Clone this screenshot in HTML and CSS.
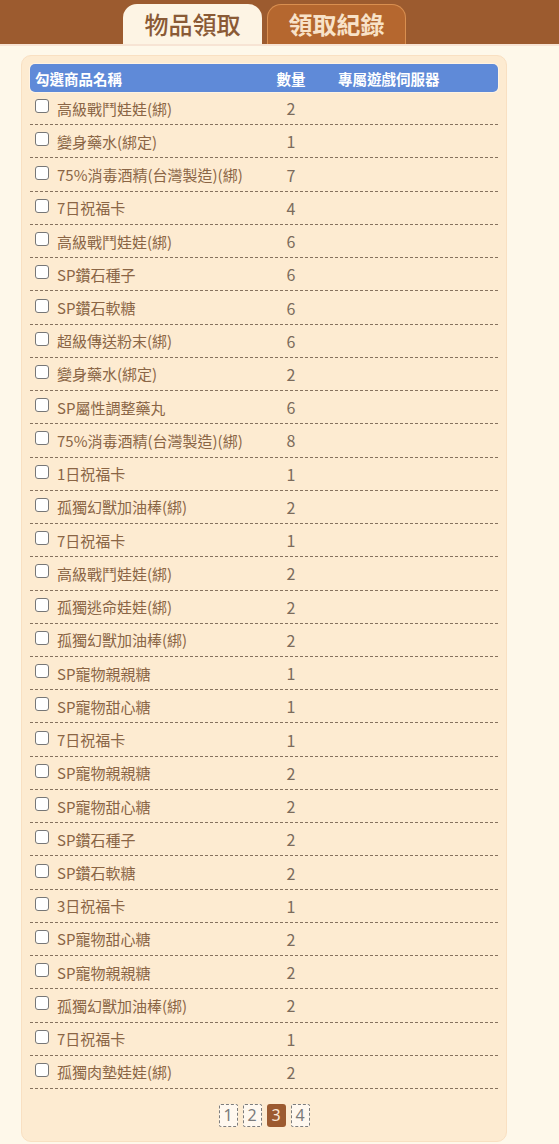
FILE: index.html
```
<!DOCTYPE html>
<html lang="zh-Hant">
<head>
<meta charset="utf-8">
<title>物品領取</title>
<link rel="stylesheet" href="styles.css">
</head>
<body>
<div class="topbar">
  <div class="tab tab-active">物品領取</div>
  <div class="tab tab-inactive">領取紀錄</div>
</div>
<div class="card">
  <div class="thead">
    <div class="c-name">勾選商品名稱</div>
    <div class="c-qty">數量</div>
    <div class="c-server">專屬遊戲伺服器</div>
  </div>
  <div class="tbody">
    <div class="row"><div class="c-name"><span class="cb"></span>高級戰鬥娃娃(綁)</div><div class="c-qty">2</div><div class="c-server"></div></div>
    <div class="row"><div class="c-name"><span class="cb"></span>變身藥水(綁定)</div><div class="c-qty">1</div><div class="c-server"></div></div>
    <div class="row"><div class="c-name"><span class="cb"></span>75%消毒酒精(台灣製造)(綁)</div><div class="c-qty">7</div><div class="c-server"></div></div>
    <div class="row"><div class="c-name"><span class="cb"></span>7日祝福卡</div><div class="c-qty">4</div><div class="c-server"></div></div>
    <div class="row"><div class="c-name"><span class="cb"></span>高級戰鬥娃娃(綁)</div><div class="c-qty">6</div><div class="c-server"></div></div>
    <div class="row"><div class="c-name"><span class="cb"></span>SP鑽石種子</div><div class="c-qty">6</div><div class="c-server"></div></div>
    <div class="row"><div class="c-name"><span class="cb"></span>SP鑽石軟糖</div><div class="c-qty">6</div><div class="c-server"></div></div>
    <div class="row"><div class="c-name"><span class="cb"></span>超級傳送粉末(綁)</div><div class="c-qty">6</div><div class="c-server"></div></div>
    <div class="row"><div class="c-name"><span class="cb"></span>變身藥水(綁定)</div><div class="c-qty">2</div><div class="c-server"></div></div>
    <div class="row"><div class="c-name"><span class="cb"></span>SP屬性調整藥丸</div><div class="c-qty">6</div><div class="c-server"></div></div>
    <div class="row"><div class="c-name"><span class="cb"></span>75%消毒酒精(台灣製造)(綁)</div><div class="c-qty">8</div><div class="c-server"></div></div>
    <div class="row"><div class="c-name"><span class="cb"></span>1日祝福卡</div><div class="c-qty">1</div><div class="c-server"></div></div>
    <div class="row"><div class="c-name"><span class="cb"></span>孤獨幻獸加油棒(綁)</div><div class="c-qty">2</div><div class="c-server"></div></div>
    <div class="row"><div class="c-name"><span class="cb"></span>7日祝福卡</div><div class="c-qty">1</div><div class="c-server"></div></div>
    <div class="row"><div class="c-name"><span class="cb"></span>高級戰鬥娃娃(綁)</div><div class="c-qty">2</div><div class="c-server"></div></div>
    <div class="row"><div class="c-name"><span class="cb"></span>孤獨逃命娃娃(綁)</div><div class="c-qty">2</div><div class="c-server"></div></div>
    <div class="row"><div class="c-name"><span class="cb"></span>孤獨幻獸加油棒(綁)</div><div class="c-qty">2</div><div class="c-server"></div></div>
    <div class="row"><div class="c-name"><span class="cb"></span>SP寵物親親糖</div><div class="c-qty">1</div><div class="c-server"></div></div>
    <div class="row"><div class="c-name"><span class="cb"></span>SP寵物甜心糖</div><div class="c-qty">1</div><div class="c-server"></div></div>
    <div class="row"><div class="c-name"><span class="cb"></span>7日祝福卡</div><div class="c-qty">1</div><div class="c-server"></div></div>
    <div class="row"><div class="c-name"><span class="cb"></span>SP寵物親親糖</div><div class="c-qty">2</div><div class="c-server"></div></div>
    <div class="row"><div class="c-name"><span class="cb"></span>SP寵物甜心糖</div><div class="c-qty">2</div><div class="c-server"></div></div>
    <div class="row"><div class="c-name"><span class="cb"></span>SP鑽石種子</div><div class="c-qty">2</div><div class="c-server"></div></div>
    <div class="row"><div class="c-name"><span class="cb"></span>SP鑽石軟糖</div><div class="c-qty">2</div><div class="c-server"></div></div>
    <div class="row"><div class="c-name"><span class="cb"></span>3日祝福卡</div><div class="c-qty">1</div><div class="c-server"></div></div>
    <div class="row"><div class="c-name"><span class="cb"></span>SP寵物甜心糖</div><div class="c-qty">2</div><div class="c-server"></div></div>
    <div class="row"><div class="c-name"><span class="cb"></span>SP寵物親親糖</div><div class="c-qty">2</div><div class="c-server"></div></div>
    <div class="row"><div class="c-name"><span class="cb"></span>孤獨幻獸加油棒(綁)</div><div class="c-qty">2</div><div class="c-server"></div></div>
    <div class="row"><div class="c-name"><span class="cb"></span>7日祝福卡</div><div class="c-qty">1</div><div class="c-server"></div></div>
    <div class="row"><div class="c-name"><span class="cb"></span>孤獨肉墊娃娃(綁)</div><div class="c-qty">2</div><div class="c-server"></div></div>
  </div>
  <div class="pager">
    <span class="pg">1</span>
    <span class="pg">2</span>
    <span class="pg pg-on">3</span>
    <span class="pg">4</span>
  </div>
</div>
</body>
</html>
```
FILE: styles.css
```
html, body {
  margin: 0;
  padding: 0;
}
body {
  background: #fef8ea;
  font-family: "Noto Sans CJK TC", "Noto Sans", sans-serif;
  color: #8a6646;
}
.topbar {
  height: 44px;
  background: #9c5b2f;
  display: flex;
  align-items: flex-end;
  padding-left: 123px;
  gap: 5px;
  border-bottom: 2px solid #f7e4d4;
}
.tab {
  width: 139px;
  text-align: center;
  font-size: 24px;
  box-sizing: border-box;
}
.tab-active {
  height: 40px;
  line-height: 40px;
  background: #fdf4e4;
  color: #8a5a36;
  border-radius: 14px 14px 0 0;
  font-weight: 500;
}
.tab-inactive {
  height: 40px;
  line-height: 38px;
  background: #b5672f;
  color: #f8e2c8;
  border: 1px solid #d98f50;
  border-bottom: none;
  border-radius: 14px 14px 0 0;
  font-weight: 700;
}
.card {
  margin: 9px 52px 0 21px;
  background: #fdebd1;
  border: 1px solid #f9e0c2;
  border-radius: 10px;
  padding: 8px 8px 14px 8px;
}
.thead {
  display: grid;
  grid-template-columns: 240px 42px 1fr;
  height: 28px;
  align-items: center;
  background: #5f8ad8;
  color: #ffffff;
  font-size: 14.5px;
  font-weight: 700;
  border-radius: 5px;
  box-shadow: 0 0 0 1px #fff3e2;
}
.thead .c-name {
  padding-left: 5px;
}
.thead .c-qty {
  text-align: center;
  white-space: nowrap;
}
.thead .c-server {
  padding-left: 26px;
}
.row {
  display: grid;
  grid-template-columns: 240px 42px 1fr;
  height: 33.24px;
  box-sizing: border-box;
  border-bottom: 1px dashed #86725e;
  align-items: center;
  font-size: 15px;
}
.row .c-name {
  display: flex;
  align-items: center;
  padding-left: 5px;
  color: #8a6545;
  white-space: nowrap;
}
.row .c-qty {
  text-align: center;
  color: #7b6b5c;
  font-size: 16px;
}
.cb {
  width: 12px;
  height: 12px;
  border: 1px solid #777777;
  border-radius: 3px;
  background: #ffffff;
  margin-right: 8px;
  margin-top: -4px;
  flex: none;
}
.pager {
  display: flex;
  justify-content: center;
  gap: 5px;
  margin-top: 15px;
}
.pg {
  width: 19px;
  height: 23px;
  box-sizing: border-box;
  border: 1px dashed #7d7d7d;
  background: #fff8ef;
  color: #7b7b7b;
  font-family: "Noto Sans", sans-serif;
  font-size: 16px;
  line-height: 21px;
  text-align: center;
  border-radius: 2px;
}
.pg-on {
  background: #9c5a30;
  border-color: #9c5a30;
  color: #fbe8d6;
  border-radius: 3px;
}
```
